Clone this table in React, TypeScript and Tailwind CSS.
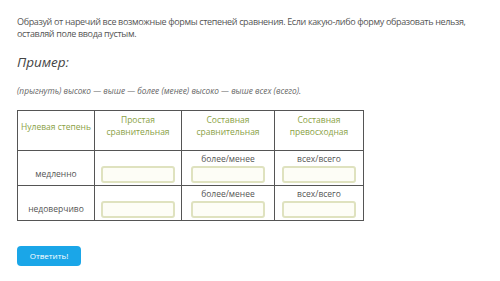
const rows = [
  { word: "медленно" },
  { word: "недоверчиво" },
]

function Field() {
  return (
    <input
      type="text"
      className="w-[74px] h-[17px] rounded-[3px] border-2 border-[#dfe2bf] bg-[#fdfdf6] outline-none"
    />
  )
}

export default function App() {
  return (
    <div className="w-[500px] h-[281px] bg-white px-[17px] pt-[16px] text-[#555] font-['Open_Sans',sans-serif]">
      <p className="text-[9px] leading-[11.5px] tracking-[-0.35px] whitespace-nowrap">
        Образуй от наречий все возможные формы степеней сравнения. Если какую-либо форму образовать нельзя,
        <br />
        оставляй поле ввода пустым.
      </p>
      <h3 className="mt-[14px] text-[13.5px] italic leading-[18px] text-[#444]">Пример:</h3>
      <p className="mt-[14px] text-[8.3px] italic leading-[11px] text-[#666]">
        (прыгнуть) высоко — выше — более (менее) высоко — выше всех (всего).
      </p>

      <table className="mt-[14px] border-collapse text-[8.5px] leading-[12px]">
        <thead>
          <tr className="h-[40px] text-[#8a9f45]">
            <th className="w-[77px] border border-[#555] font-normal align-middle pb-[8px]">Нулевая степень</th>
            <th className="w-[87px] border border-[#555] font-normal align-top pt-[3px]">Простая<br />сравнительная</th>
            <th className="w-[93px] border border-[#555] font-normal align-top pt-[3px]">Составная<br />сравнительная</th>
            <th className="w-[89px] border border-[#555] font-normal align-top pt-[3px]">Составная<br />превосходная</th>
          </tr>
        </thead>
        <tbody>
          {rows.map((row) => (
            <tr key={row.word} className="h-[35px]">
              <td className="border border-[#555] text-center align-bottom pb-[5px]">{row.word}</td>
              <td className="border border-[#555] align-bottom pb-[2px]">
                <div className="flex justify-center"><Field /></div>
              </td>
              <td className="border border-[#555] align-bottom pb-[2px]">
                <div className="flex flex-col items-center">
                  <span className="leading-[11px] mb-[2px]">более/менее</span>
                  <Field />
                </div>
              </td>
              <td className="border border-[#555] align-bottom pb-[2px]">
                <div className="flex flex-col items-center">
                  <span className="leading-[11px] mb-[2px]">всех/всего</span>
                  <Field />
                </div>
              </td>
            </tr>
          ))}
        </tbody>
      </table>

      <button className="mt-[25px] w-[64px] h-[20px] rounded-[4px] bg-[#1aa6e8] text-white text-[8px]">
        Ответить!
      </button>
    </div>
  )
}
